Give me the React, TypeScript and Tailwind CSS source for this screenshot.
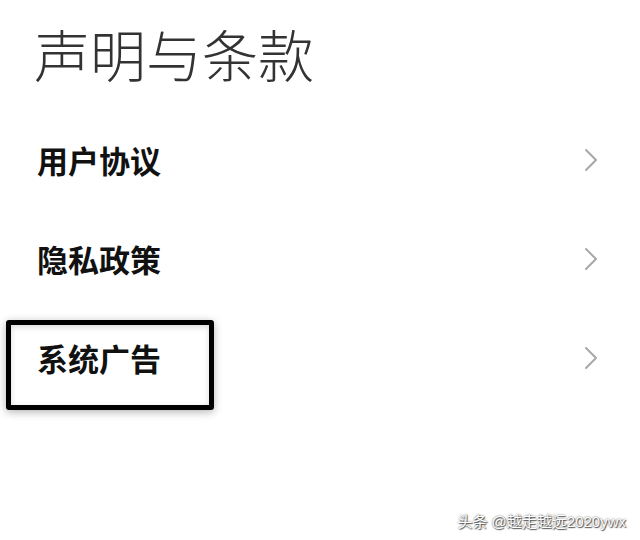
const items = ["用户协议", "隐私政策", "系统广告"];

function Chevron() {
  return (
    <svg width="14" height="24" viewBox="0 0 14 24" fill="none">
      <path d="M2 2 L12 12 L2 22" stroke="#a8a8a8" strokeWidth="2" strokeLinecap="round" strokeLinejoin="round" />
    </svg>
  );
}

export default function App() {
  return (
    <div
      className="relative w-[640px] h-[540px] bg-white overflow-hidden"
      style={{ fontFamily: '"Noto Sans CJK SC", "Noto Sans", sans-serif' }}
    >
      <div className="h-[110px] flex items-center pl-[34px] pb-[4px]">
        <h1 className="text-[56px] leading-none font-light text-[#333333]">声明与条款</h1>
      </div>

      <div className="flex flex-col">
        {items.map((t) => (
          <div key={t} className="h-[99px] flex items-center justify-between pl-[37px] pr-[42px]">
            <span className="text-[31px] leading-none font-bold text-[#111111]">{t}</span>
            <Chevron />
          </div>
        ))}
      </div>

      {/* annotation box */}
      <div className="absolute left-[6px] top-[320px] w-[208px] h-[90px] border-[5px] border-black rounded-[3px] shadow-[0_2px_8px_rgba(0,0,0,0.3),inset_0_2px_6px_rgba(0,0,0,0.15)]" />

      <div
        className="absolute right-[14px] bottom-[11px] text-[15px] leading-none text-white"
        style={{
          fontFamily: '"Liberation Sans", "Noto Sans CJK SC", sans-serif',
          textShadow: "0 0 2px rgba(0,0,0,0.7), 1px 1px 1px rgba(0,0,0,0.6)",
        }}
      >
        头条 @越走越远2020ywx
      </div>
    </div>
  );
}
